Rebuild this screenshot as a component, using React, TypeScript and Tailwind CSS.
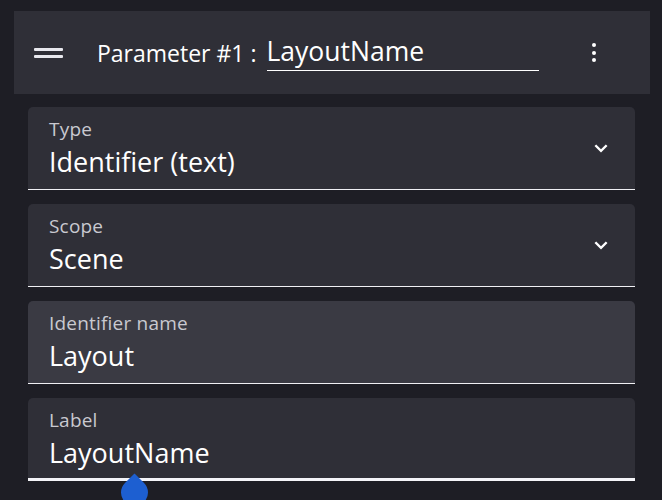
import React from "react";

const font = { fontFamily: '"Open Sans", "Noto Sans", sans-serif' };

const Chevron = () => (
  <svg viewBox="0 0 24 24" className="w-[24px] h-[24px] text-white" fill="currentColor">
    <path d="M7.2 8.4 12 13.2l4.8-4.8L18.5 10 12 16.5 5.5 10z" />
  </svg>
);

interface FieldProps {
  label: string;
  value: string;
  select?: boolean;
  hovered?: boolean;
  focused?: boolean;
}

const Field = ({ label, value, select, hovered, focused }: FieldProps) => (
  <div
    className={`relative h-[83px] rounded-t-[5px] flex items-center pl-[21px] pr-[22px] ${
      hovered ? "bg-[#3a3a43]" : "bg-[#2f2f37]"
    } ${focused ? "border-b-[3px] border-[#f4f4f8]" : "border-b-[1.5px] border-[#f0f0f4]"}`}
  >
    <div className="flex-1 self-start flex flex-col pt-[10px] gap-[3px]">
      <span className="text-[19px] leading-[24px] text-[#c9c9d0] tracking-[0.2px]">{label}</span>
      <span className="text-[27px] leading-[36px] text-white">{value}</span>
    </div>
    {select && <Chevron />}
    {focused && (
      <div className="absolute left-[93px] top-[81px] w-[27px] h-[27px] bg-[#1d5fd1] rounded-full rounded-tl-none rotate-45" />
    )}
  </div>
);

export default function App() {
  return (
    <div className="w-[662px] h-[500px] bg-[#1e1e25] overflow-hidden pt-[11px]" style={font}>
      {/* Parameter header */}
      <div className="ml-[14px] w-[636px] h-[83px] bg-[#2f2f37] flex items-center pl-[20px] pr-[54px]">
        <div className="w-[29px] flex flex-col gap-[4px]">
          <div className="h-[3px] bg-[#e8e8ee] rounded-[1px]" />
          <div className="h-[3px] bg-[#e8e8ee] rounded-[1px]" />
        </div>
        <span className="ml-[34px] text-[23px] text-white leading-[30px]">Parameter #1 :</span>
        <div className="ml-[10px] w-[272px] border-b-[1.5px] border-white pb-[2px]">
          <span className="text-[26.5px] text-white leading-[34px] block">LayoutName</span>
        </div>
        <div className="ml-auto flex flex-col gap-[3.5px] items-center">
          <div className="w-[4px] h-[4px] rounded-full bg-white" />
          <div className="w-[4px] h-[4px] rounded-full bg-white" />
          <div className="w-[4px] h-[4px] rounded-full bg-white" />
        </div>
      </div>

      {/* Fields */}
      <div className="ml-[28px] w-[607px] mt-[13px] flex flex-col gap-[14px]">
        <Field label="Type" value="Identifier (text)" select />
        <Field label="Scope" value="Scene" select />
        <Field label="Identifier name" value="Layout" hovered />
        <Field label="Label" value="LayoutName" focused />
      </div>
    </div>
  );
}
